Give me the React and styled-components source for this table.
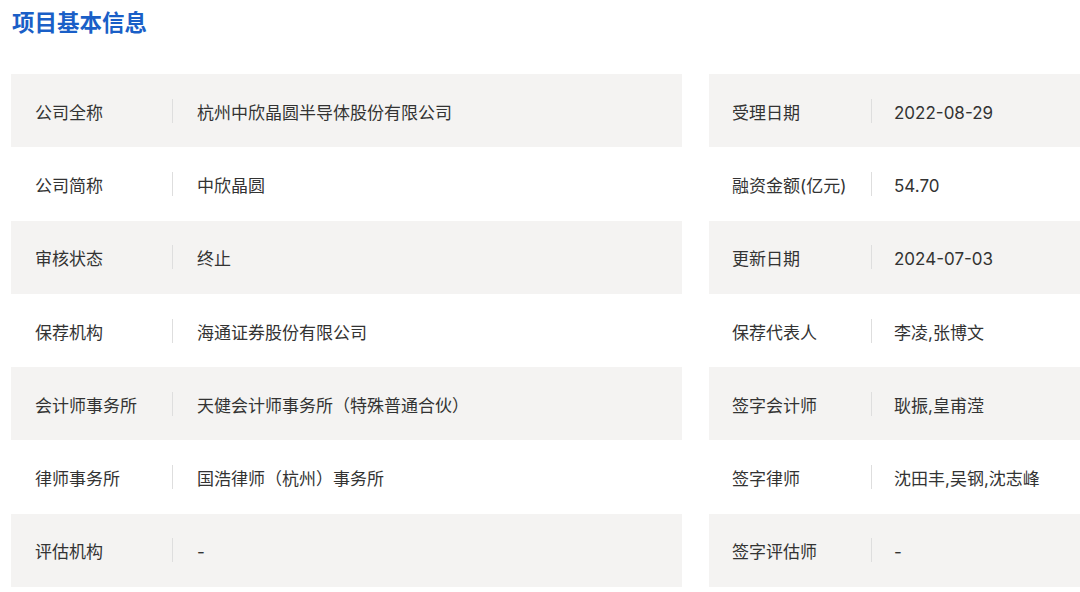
import React from 'react'
import styled, { createGlobalStyle } from 'styled-components'

const GlobalStyle = createGlobalStyle`
  html, body {
    margin: 0;
    padding: 0;
    background: #ffffff;
  }
  body {
    font-family: Inter, "Noto Sans CJK SC", sans-serif;
    color: #333333;
  }
`;

const rows = [
  ['公司全称', '杭州中欣晶圆半导体股份有限公司', '受理日期', '2022-08-29'],
  ['公司简称', '中欣晶圆', '融资金额(亿元)', '54.70'],
  ['审核状态', '终止', '更新日期', '2024-07-03'],
  ['保荐机构', '海通证券股份有限公司', '保荐代表人', '李凌,张博文'],
  ['会计师事务所', '天健会计师事务所（特殊普通合伙）', '签字会计师', '耿振,皇甫滢'],
  ['律师事务所', '国浩律师（杭州）事务所', '签字律师', '沈田丰,吴钢,沈志峰'],
  ['评估机构', '-', '签字评估师', '-'],
];

const App = () => {
  return (
    <Page>
      <GlobalStyle />
      <Title>项目基本信息</Title>
      <Grid>
        {rows.map((r, i) => (
          <React.Fragment key={i}>
            <Cell $shaded={i % 2 === 0} $indent={24}>
              <Label $width={137}>{r[0]}</Label>
              <Divider />
              <Value $indent={24}>{r[1]}</Value>
            </Cell>
            <Cell $shaded={i % 2 === 0} $indent={23}>
              <Label $width={139}>{r[2]}</Label>
              <Divider />
              <Value $indent={22}>{r[3]}</Value>
            </Cell>
          </React.Fragment>
        ))}
      </Grid>
    </Page>
  );
};

const Page = styled.div`
  width: 1080px;
  padding: 6px 0 0 11px;
  box-sizing: border-box;
`;

const Title = styled.h2`
  margin: 0 0 0 1px;
  font-size: 22.5px;
  line-height: 30px;
  font-weight: 700;
  color: #1a5fc7;
  font-family: "Noto Sans CJK SC", sans-serif;
`;

const Grid = styled.div`
  margin-top: 38px;
  display: grid;
  grid-template-columns: 671px 1fr;
  grid-auto-rows: 73.3px;
  column-gap: 27px;
`;

const Cell = styled.div`
  display: flex;
  align-items: center;
  padding-left: ${p => p.$indent}px;
  background: ${p => (p.$shaded ? '#f4f3f2' : '#ffffff')};
  font-size: 17px;
  line-height: 24px;
  color: #333333;
`;

const Label = styled.div`
  width: ${p => p.$width}px;
  padding-top: 4px;
  flex-shrink: 0;
  white-space: nowrap;
`;

const Divider = styled.div`
  width: 1px;
  height: 24px;
  background: #dedede;
  flex-shrink: 0;
`;

const Value = styled.div`
  padding-left: ${p => p.$indent}px;
  padding-top: 4px;
  white-space: nowrap;
`;

export default App;
